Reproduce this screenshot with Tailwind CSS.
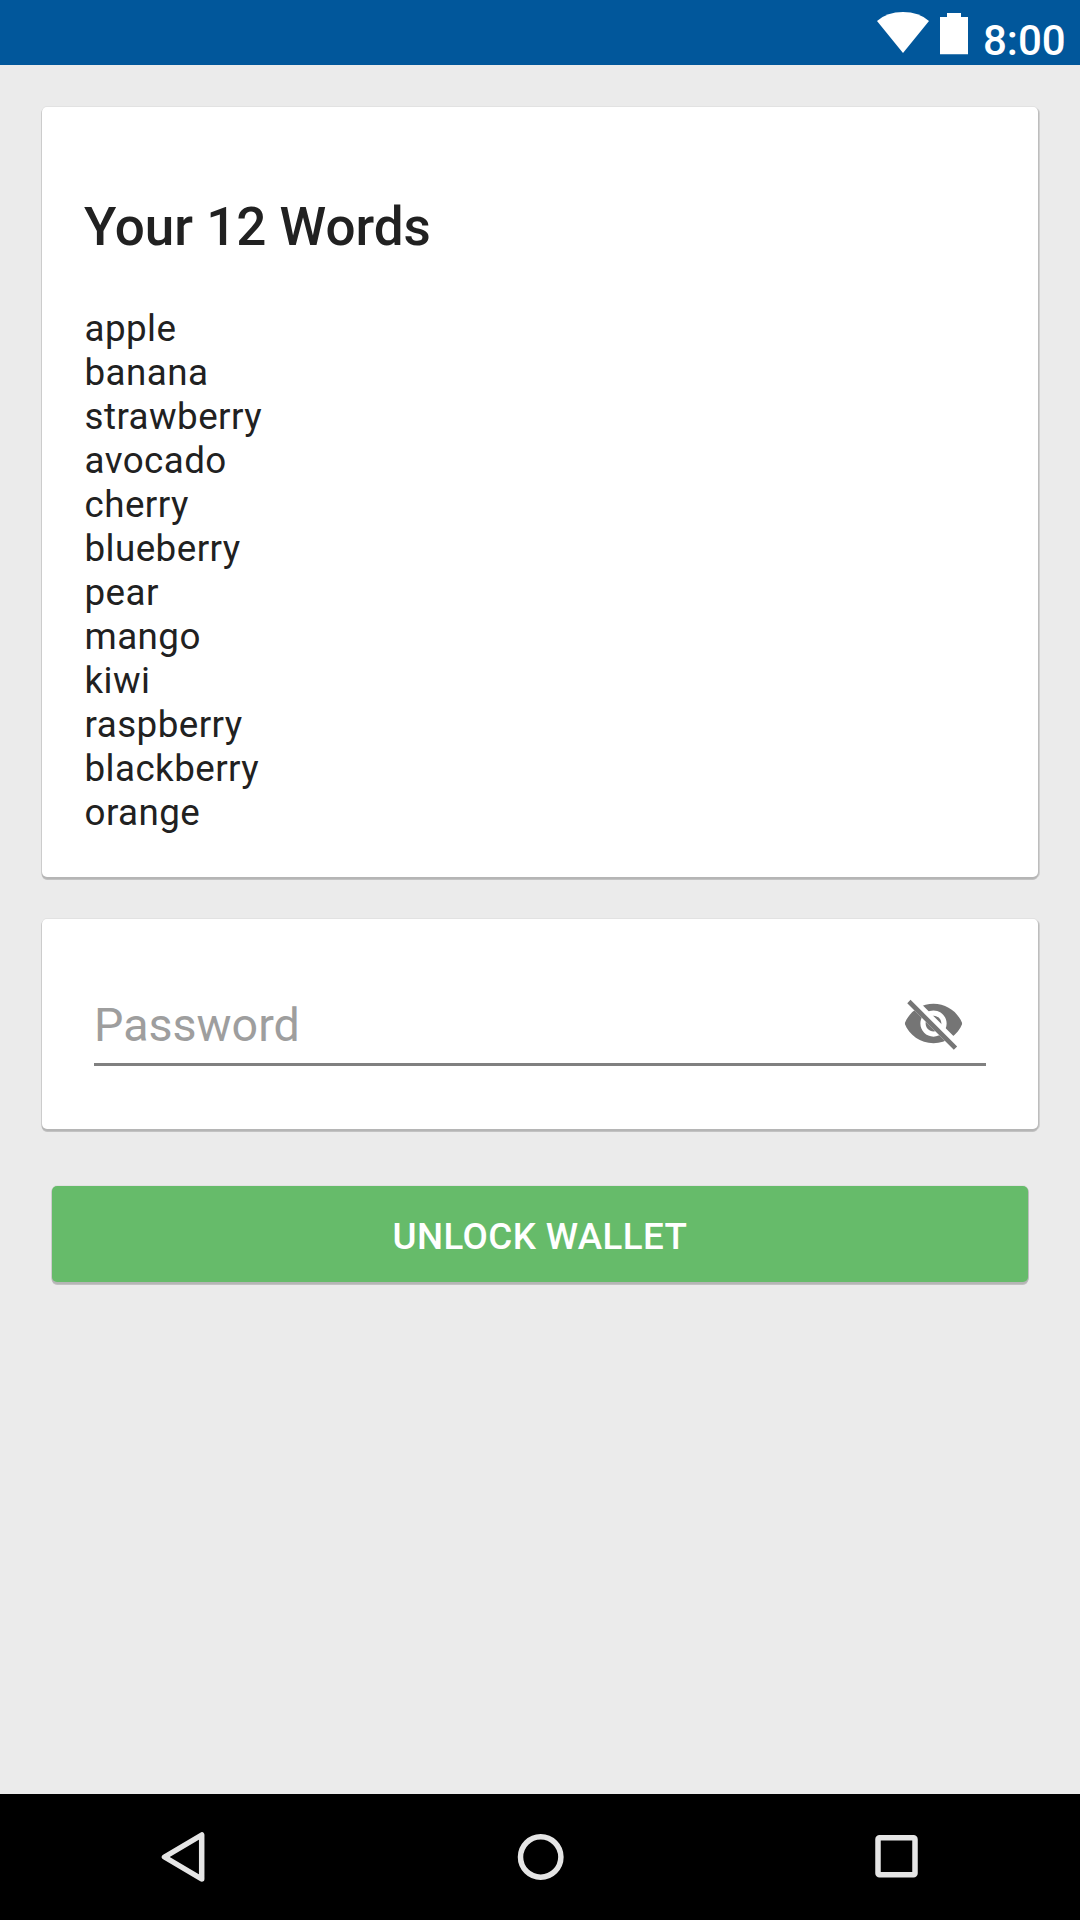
<!DOCTYPE html>
<html lang="en">
<head>
<meta charset="utf-8">
<title>Unlock Wallet</title>
<script src="https://cdn.jsdelivr.net/npm/@tailwindcss/browser@4"></script>
</head>
<body class="flex h-[1920px] w-[1080px] flex-col overflow-hidden bg-[#ebebeb] font-['Roboto',sans-serif] text-[#212121]">
  <header class="flex h-[65px] shrink-0 items-start justify-end bg-[#01579b] pr-[14px] text-white">
    <svg class="h-[65px] w-[100px]" viewBox="0 0 100 65" fill="currentColor">
      <path d="M9 21Q19 12 35 12T61 21L35 53Z"/>
      <path d="M72 17H79V13H93V17H100V54.300H72Z"/>
    </svg>
    <span class="w-[98px] pt-[16px] pl-[15px] text-[42px] leading-[49px] font-medium whitespace-nowrap">8:00</span>
  </header>
  <main class="flex grow flex-col px-[42px] pt-[42px]">
    <section class="h-[770px] rounded-[5px] bg-white px-[42px] pt-[89px] shadow-[0_2px_0_#b5b5b5,0_3px_0_#c2c2c2,1px_1px_0_#bdbdbd,2px_1px_0_#d0d0d0,-1px_1px_0_#cccccc,0_-1px_0_#e2e2e2]">
      <h1 class="text-[53px] leading-[62px] font-medium">Your 12 Words</h1>
      <ul class="pt-[49px] pl-[0.5px] text-[36.75px] leading-[44px] tracking-[0.45px]">
        <li>apple</li>
        <li>banana</li>
        <li>strawberry</li>
        <li>avocado</li>
        <li>cherry</li>
        <li>blueberry</li>
        <li>pear</li>
        <li>mango</li>
        <li>kiwi</li>
        <li>raspberry</li>
        <li>blackberry</li>
        <li>orange</li>
      </ul>
    </section>
    <section class="mt-[42px] h-[210px] rounded-[5px] bg-white px-[52px] pt-[63px] shadow-[0_2px_0_#b5b5b5,0_3px_0_#c2c2c2,1px_1px_0_#bdbdbd,2px_1px_0_#d0d0d0,-1px_1px_0_#cccccc,0_-1px_0_#e2e2e2]">
      <div class="flex h-[84px] items-start justify-between border-b-3 border-[#808080] pr-[21px]">
        <span class="pt-[15px] text-[46.6px] leading-[56px] text-[#9e9e9e]">Password</span>
        <svg class="mt-[10px] size-[63px]" viewBox="0 0 24 24">
          <defs><clipPath id="slash"><path d="M2 4.270L19.730 22L22.270 19.460L4.540 1.730V1H23V23H1V4.270Z"/></clipPath></defs>
          <path clip-path="url(#slash)" fill="#757575" fill-rule="evenodd" d="M12 4.500C7 4.500 2.730 7.610 1 12c1.730 4.390 6 7.500 11 7.500s9.270-3.110 11-7.500c-1.730-4.390-6-7.500-11-7.500zM12 17c-2.760 0-5-2.240-5-5s2.240-5 5-5 5 2.240 5 5-2.240 5-5 5zM12 9c-1.660 0-3 1.340-3 3s1.340 3 3 3 3-1.340 3-3-1.340-3-3-3z"/>
          <path d="M3.270 4.270L19.740 20.740" stroke="#757575" stroke-width="1.800" stroke-linecap="square"/>
        </svg>
      </div>
    </section>
    <button class="mx-[10px] mt-[57px] flex h-[96px] items-center justify-center rounded-[5px] bg-[#66bb6a] pt-[5px] text-[36.75px] leading-[44px] font-medium tracking-[0.4px] text-white shadow-[0_2px_0_#b5b5b5,0_3px_0_#c2c2c2,1px_1px_0_#bdbdbd,-1px_1px_0_#cccccc,0_-1px_0_#e2e2e2]">UNLOCK WALLET</button>
  </main>
  <nav class="flex h-[126px] shrink-0 items-center justify-between bg-black px-[121px]">
    <svg class="h-[126px] w-[126px]" viewBox="0 0 126 126" fill="none" stroke="#e5e5e5" stroke-width="5.500" stroke-linejoin="round"><path d="M80.700 41V85L43.500 63Z"/></svg>
    <svg class="h-[126px] w-[126px]" viewBox="0 0 126 126" fill="none" stroke="#e5e5e5" stroke-width="5.500"><circle cx="63.700" cy="63" r="20.200"/></svg>
    <svg class="h-[126px] w-[126px]" viewBox="0 0 126 126" fill="none" stroke="#e5e5e5" stroke-width="5.500"><rect x="45" y="43.800" width="37" height="37" rx="1.500"/></svg>
  </nav>
</body>
</html>
